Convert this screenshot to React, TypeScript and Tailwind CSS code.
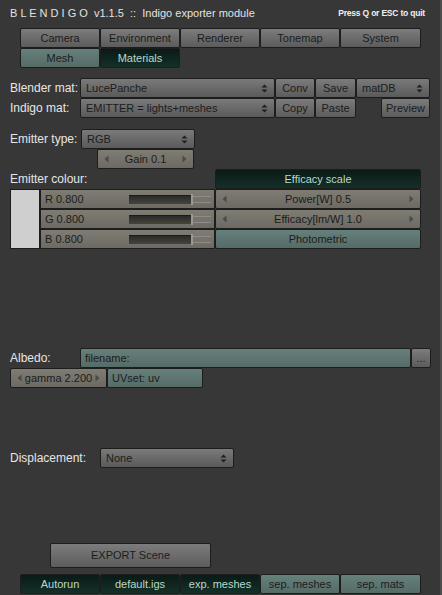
import React from "react";

const FONT = { fontFamily: '"Liberation Sans", Arial, sans-serif' };

type Tone = "gray" | "dark" | "teal" | "num";

const toneCls: Record<Tone, string> = {
  gray: "bg-linear-to-b from-[#7c7c7c] to-[#5c5c5c] text-[#1c1c1c]",
  dark: "bg-linear-to-b from-[#0a1a17] to-[#143029] text-[#b9d9c8]",
  teal: "bg-linear-to-b from-[#66807b] to-[#556b67] text-[#1c1c1c]",
  num: "bg-linear-to-b from-[#7e7c73] to-[#6c6a62] text-[#1c1c1c]",
};

const Btn = ({
  label,
  w,
  h = 20,
  tone = "gray",
  className = "",
}: {
  label: string;
  w: number;
  h?: number;
  tone?: Tone;
  className?: string;
}) => (
  <div
    className={`shrink-0 flex items-center justify-center border border-[#1d1d1d] rounded-[2px] text-[11px] ${toneCls[tone]} ${className}`}
    style={{ width: w, height: h }}
  >
    {label}
  </div>
);

const UpDown = () => (
  <svg width="7" height="9" viewBox="0 0 7 9" className="shrink-0">
    <path d="M0.5 3.5 L3.5 0.5 L6.5 3.5 Z" fill="#1e1e1e" />
    <path d="M0.5 5.5 L3.5 8.5 L6.5 5.5 Z" fill="#1e1e1e" />
  </svg>
);

const Menu = ({ label, w }: { label: string; w: number }) => (
  <div
    className="shrink-0 flex items-center justify-between border border-[#1d1d1d] rounded-[2px] text-[11px] text-[#1c1c1c] pl-[5px] pr-[6px] bg-linear-to-b from-[#7a7a7a] to-[#5a5a5a]"
    style={{ width: w, height: 20 }}
  >
    <span>{label}</span>
    <UpDown />
  </div>
);

const Arrow = ({ dir }: { dir: "l" | "r" }) => (
  <svg width="5" height="8" viewBox="0 0 5 8" className="shrink-0">
    {dir === "l" ? (
      <path d="M4.5 0.5 L0.5 4 L4.5 7.5 Z" fill="#4a4a46" />
    ) : (
      <path d="M0.5 0.5 L4.5 4 L0.5 7.5 Z" fill="#4a4a46" />
    )}
  </svg>
);

const Num = ({ label, w }: { label: string; w: number }) => (
  <div
    className={`shrink-0 flex items-center justify-between border border-[#1d1d1d] rounded-[2px] text-[11px] px-[6px] ${toneCls.num}`}
    style={{ width: w, height: 20 }}
  >
    <Arrow dir="l" />
    <span className="text-[#1c1c1c]">{label}</span>
    <Arrow dir="r" />
  </div>
);

const Slider = ({ label }: { label: string }) => (
  <div
    className={`flex items-center border border-[#1d1d1d] text-[11px] pl-[4px] pr-[3px] ${toneCls.num}`}
    style={{ width: 175, height: 20 }}
  >
    <span className="flex-1">{label}</span>
    <div className="flex items-center">
      <div className="w-[62px] h-[9px] bg-linear-to-b from-[#2a2a28] to-[#45443f] border-t border-[#1a1a1a]" />
      <div className="w-[2px] h-[11px] bg-[#9a9890]" />
      <div className="w-[18px] h-[7px] border-y border-[#8e8c84] bg-[#75736b]" />
    </div>
  </div>
);

const Label = ({ text, w }: { text: string; w: number }) => (
  <div className="shrink-0 text-[12px] text-[#e6e6e6]" style={{ width: w }}>
    {text}
  </div>
);

export default function App() {
  return (
    <div
      className="w-[442px] h-[595px] bg-[#373737] border-r-2 border-[#4c4c4c] overflow-hidden"
      style={FONT}
    >
      <div className="flex items-center justify-between pl-[10px] pr-[15px] h-[28px] pb-[1px]">
        <span className="text-[11px] text-[#e2e2e2] whitespace-pre">
          {"B L E N D I G O  v1.1.5  ::  Indigo exporter module"}
        </span>
        <span className="text-[8.5px] text-[#f0f0f0] font-bold tracking-[-0.2px]">
          Press Q or ESC to quit
        </span>
      </div>

      <div className="flex pl-[20px]">
        <Btn label="Camera" w={80} />
        <Btn label="Environment" w={80} />
        <Btn label="Renderer" w={80} />
        <Btn label="Tonemap" w={80} />
        <Btn label="System" w={81} />
      </div>
      <div className="flex pl-[20px]">
        <Btn label="Mesh" w={80} tone="teal" />
        <Btn label="Materials" w={80} tone="dark" />
      </div>

      <div className="flex items-center pl-[10px] mt-[10px]">
        <Label text="Blender mat:" w={70} />
        <Menu label="LucePanche" w={195} />
        <Btn label="Conv" w={40} />
        <Btn label="Save" w={41} />
        <Menu label="matDB" w={74} />
      </div>
      <div className="flex items-center pl-[10px]">
        <Label text="Indigo mat:" w={70} />
        <Menu label="EMITTER = lights+meshes" w={195} />
        <Btn label="Copy" w={40} />
        <Btn label="Paste" w={41} />
        <Btn label="Preview" w={49} className="ml-[25px]" />
      </div>

      <div className="flex items-center pl-[10px] mt-[11px]">
        <Label text="Emitter type:" w={71} />
        <Menu label="RGB" w={114} />
      </div>
      <div className="flex pl-[97px]">
        <Num label="Gain 0.1" w={97} />
      </div>

      <div className="flex items-center pl-[10px]">
        <Label text="Emitter colour:" w={205} />
        <Btn label="Efficacy scale" w={206} tone="dark" />
      </div>
      <div className="flex pl-[10px]">
        <div className="w-[30px] h-[60px] bg-[#cfcfcf] border border-[#1d1d1d]" />
        <div className="flex flex-col">
          <Slider label="R 0.800" />
          <Slider label="G 0.800" />
          <Slider label="B 0.800" />
        </div>
        <div className="flex flex-col">
          <Num label="Power[W] 0.5" w={206} />
          <Num label="Efficacy[lm/W] 1.0" w={206} />
          <Btn label="Photometric" w={206} tone="teal" />
        </div>
      </div>

      <div className="flex items-center pl-[10px] mt-[99px]">
        <Label text="Albedo:" w={70} />
        <div
          className={`flex items-center border border-[#1d1d1d] rounded-[2px] text-[11px] pl-[4px] ${toneCls.teal}`}
          style={{ width: 331, height: 20 }}
        >
          filename:
        </div>
        <Btn label="..." w={20} />
      </div>
      <div className="flex pl-[10px]">
        <Num label="gamma 2.200" w={97} />
        <div
          className={`flex items-center border border-[#1d1d1d] rounded-[2px] text-[11px] pl-[4px] ${toneCls.teal}`}
          style={{ width: 96, height: 20 }}
        >
          UVset: uv
        </div>
      </div>

      <div className="flex items-center pl-[10px] mt-[60px]">
        <Label text="Displacement:" w={90} />
        <Menu label="None" w={134} />
      </div>

      <div className="flex pl-[50px] mt-[75px]">
        <Btn label="EXPORT Scene" w={161} h={25} />
      </div>
      <div className="flex pl-[20px] mt-[6px]">
        <Btn label="Autorun" w={80} tone="dark" />
        <Btn label="default.igs" w={80} tone="dark" />
        <Btn label="exp. meshes" w={80} tone="dark" />
        <Btn label="sep. meshes" w={80} tone="teal" />
        <Btn label="sep. mats" w={81} tone="teal" />
      </div>
    </div>
  );
}
